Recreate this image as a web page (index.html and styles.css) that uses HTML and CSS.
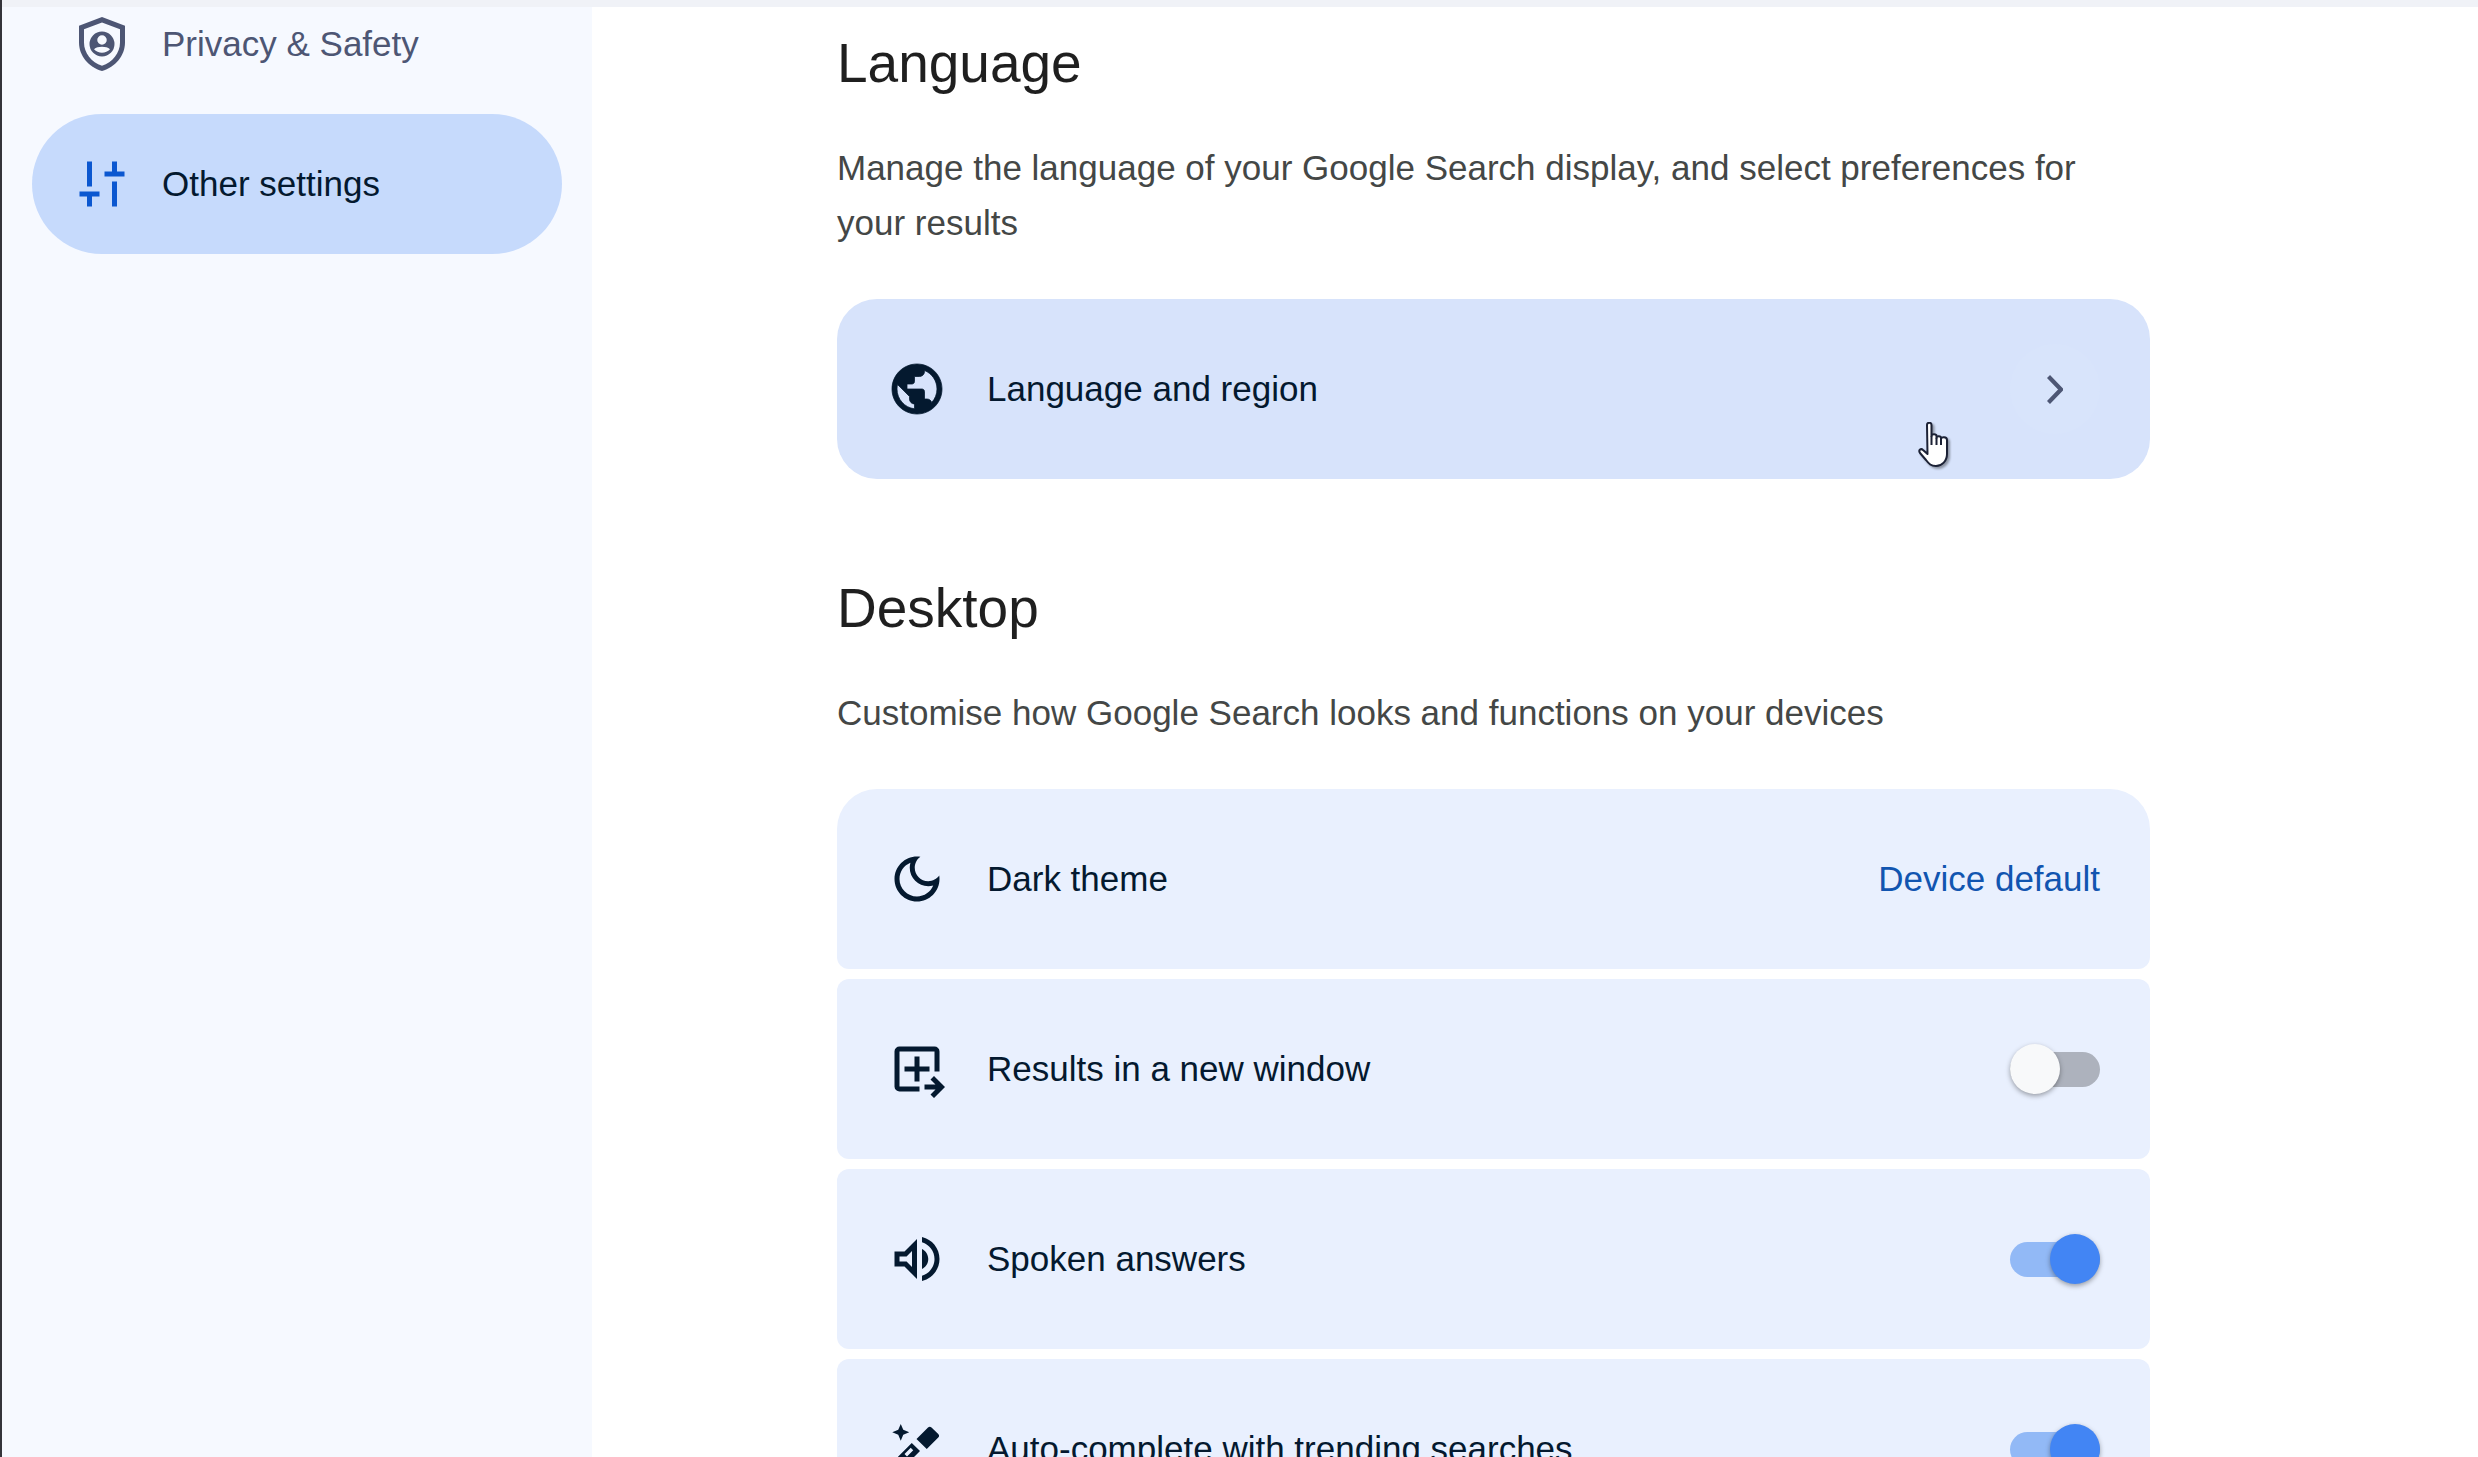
FILE: index.html
```html
<!DOCTYPE html>
<html lang="en">
<head>
<meta charset="utf-8">
<title>Search settings</title>
<link rel="stylesheet" href="styles.css">
</head>
<body>
<div class="edge-marks"></div>
<div class="topstrip"></div>
<div class="layout">
  <nav class="sidebar">
    <a class="nav-item">
      <svg class="nav-icon icon-muted" viewBox="0 0 24 24"><path fill-rule="evenodd" d="M12 1.200 2.800 4.700v6.700c0 5.200 3.800 9.900 9.200 11.400 5.400-1.500 9.200-6.200 9.200-11.400V4.700L12 1.200zm0 2.200 7.200 2.700v5.300c0 4.200-3 8-7.200 9.300-4.200-1.300-7.200-5.100-7.200-9.300V6.100L12 3.400zM12 7a5 5 0 1 0 0 10 5 5 0 0 0 0-10zm0 1.500a1.900 1.900 0 1 1 0 3.800 1.900 1.900 0 0 1 0-3.800zm0 7c-1.200 0-2.400-.5-3.200-1.400.8-.7 1.900-1 3.200-1s2.400.3 3.200 1c-.8.900-2 1.400-3.200 1.400z"/></svg>
      <span>Privacy &amp; Safety</span>
    </a>
    <a class="nav-item nav-active">
      <svg class="nav-icon icon-blue" viewBox="0 0 24 24"><path d="M6 3h2v10H6zM3 15h8v2H8v4H6v-4H3zM16 3h2v4h3v2h-8V7h3zM16 11h2v10h-2z"/></svg>
      <span>Other settings</span>
    </a>
  </nav>
  <main class="content">
    <h2 class="heading">Language</h2>
    <p class="desc">Manage the language of your Google Search display, and select preferences for your results</p>
    <div class="card card-hover">
      <svg class="icon icon-bold" viewBox="0 0 24 24"><path d="M12 2C6.480 2 2 6.480 2 12s4.480 10 10 10 10-4.480 10-10S17.520 2 12 2zm-1 17.930c-3.950-.49-7-3.850-7-7.930 0-.62.08-1.210.21-1.790L9 15v1c0 1.100.9 2 2 2v1.930zm6.900-2.540c-.26-.81-1-1.390-1.900-1.390h-1v-3c0-.55-.45-1-1-1H8v-2h2c.55 0 1-.45 1-1V7h2c1.100 0 2-.9 2-2v-.41c2.930 1.190 5 4.060 5 7.410 0 2.080-.8 3.970-2.100 5.390z"/></svg>
      <span class="label">Language and region</span>
      <span class="chevron-wrap"><svg class="chevron" viewBox="0 0 16 29"><path d="M1.500 1.500 14 14.500 1.500 27.500" fill="none" stroke-width="4.200"/></svg></span>
      <svg class="cursor" viewBox="0 0 33 46"><path d="M10 3c0-3 4.500-3 4.500 0v11c0-2.500 5-2.500 5 0v2c0-2.500 4.500-2.500 4.500 0v1c0-2.500 6-2.500 6 1v14c0 7-5 12-11 12-5 0-7-2-10-6l-6-7c-2-3 1-5 3-3l4.500 4z" fill="#fff" stroke="#1b2135" stroke-width="2" stroke-linejoin="round"/><path d="M14.500 14v9M19.500 16v7M24 17v6" fill="none" stroke="#1b2135" stroke-width="2"/></svg>
    </div>
    <h2 class="heading heading-second">Desktop</h2>
    <p class="desc">Customise how Google Search looks and functions on your devices</p>
    <div class="card-list">
      <div class="card card-first">
        <svg class="icon" viewBox="0 0 24 24"><path d="M9.370 5.510C9.190 6.150 9.100 6.820 9.100 7.500c0 4.080 3.320 7.400 7.400 7.400.68 0 1.350-.09 1.990-.27C17.450 17.190 14.930 19 12 19c-3.860 0-7-3.140-7-7 0-2.930 1.810-5.450 4.370-6.490zM12 3c-4.970 0-9 4.030-9 9s4.030 9 9 9 9-4.030 9-9c0-.46-.04-.92-.1-1.360-.98 1.370-2.580 2.260-4.400 2.260-2.980 0-5.400-2.420-5.400-5.400 0-1.810.89-3.420 2.260-4.400C12.920 3.040 12.460 3 12 3z"/></svg>
        <span class="label">Dark theme</span>
        <span class="value">Device default</span>
      </div>
      <div class="card">
        <svg class="icon" viewBox="0 0 24 24"><path d="M3 5a2 2 0 0 1 2-2h14a2 2 0 0 1 2 2v8h-2V5H5v14h8v2H5a2 2 0 0 1-2-2zM11 7h2v4h4v2h-4v4h-2v-4H7v-2h4zM15 18.200h4.400l-2-2 1.400-1.400 4.400 4.400-4.400 4.400-1.400-1.400 2-2H15z"/></svg>
        <span class="label">Results in a new window</span>
        <span class="toggle"><span class="knob"></span></span>
      </div>
      <div class="card">
        <svg class="icon" viewBox="0 0 24 24"><path d="M3 9v6h4l5 5V4L7 9H3zm7-.17v6.340L7.830 13H5v-2h2.830L10 8.830zM16.500 12c0-1.770-1.020-3.290-2.500-4.030v8.050c1.480-.73 2.500-2.250 2.500-4.020zM14 3.230v2.060c2.890.86 5 3.540 5 6.710s-2.110 5.850-5 6.710v2.060c4.010-.91 7-4.490 7-8.770 0-4.280-2.990-7.860-7-8.770z"/></svg>
        <span class="label">Spoken answers</span>
        <span class="toggle toggle-on"><span class="knob"></span></span>
      </div>
      <div class="card">
        <svg class="icon" viewBox="0 0 24 24"><path fill-rule="evenodd" d="M5.500 2 6.500 4.300 8.900 5.300 6.500 6.300 5.500 8.700 4.500 6.300 2.100 5.300 4.500 4.300zM16.400 3.400a1 1 0 0 1 1.400 0l2.700 2.600a1 1 0 0 1 0 1.400l-4.600 4.600-4.100-4zM9.900 9.600l3.300 3.200L6 20l-3.300-3.200zM9.500 11.500l-2.500 2.500 1 1 2.500-2.500z"/></svg>
        <span class="label">Auto-complete with trending searches</span>
        <span class="toggle toggle-on"><span class="knob"></span></span>
      </div>
    </div>
  </main>
</div>
</body>
</html>
```
FILE: styles.css
```css
html, body { margin: 0; height: 100%; overflow: hidden; background: #fff; }
body { width: 2478px; height: 1457px; font-family: "Liberation Sans", Arial, sans-serif; border-left: 2px solid #34343a; box-sizing: border-box; display: flex; flex-direction: column; position: relative; }
.edge-marks { position: absolute; left: -2px; top: 724px; width: 2px; height: 13px; background: #4a55a8; }
.topstrip { height: 7px; background: #f0f2f7; flex: none; }
.layout { flex: 1; display: flex; overflow: hidden; }
.sidebar { width: 590px; flex: none; background: #f6f9ff; box-sizing: border-box; padding: 0 30px; }
.nav-item { height: 140px; display: flex; align-items: center; padding-left: 40px; gap: 30px; border-radius: 70px; font-size: 35px; color: #4d5674; }
.nav-item:first-child { margin-top: -33px; }
.nav-active { background: #c6dafc; color: #04192f; }
.nav-icon { width: 60px; height: 60px; flex: none; }
.icon-muted { fill: #4d5674; }
.icon-blue { fill: #0b57d0; }
.content { flex: none; width: 1313px; margin-left: 245px; }
.heading { margin: 26px 0 0; font-weight: 400; font-size: 55px; line-height: 60px; color: #1f1f1f; }
.heading-second { margin-top: 99px; }
.desc { margin: 47px 0 0; font-size: 35px; line-height: 55px; color: #444746; }
.card { height: 180px; box-sizing: border-box; padding: 0 50px; display: flex; align-items: center; gap: 40px; background: #e9f0fe; border-radius: 12px; position: relative; font-size: 35px; color: #04192f; }
.card-hover { margin-top: 49px; background: #d7e3fb; border-radius: 40px; }
.card-list { margin-top: 49px; display: flex; flex-direction: column; gap: 10px; }
.card-first { border-radius: 40px 40px 12px 12px; }
.icon { width: 60px; height: 60px; flex: none; fill: #04192f; }
.icon-bold { stroke: #04192f; stroke-width: .3; }
.label { flex: 1; }
.value { color: #1155b0; }
.chevron-wrap { width: 90px; height: 90px; border-radius: 50%; background: #d8e4fb; display: flex; align-items: center; justify-content: center; }
.chevron { width: 16px; height: 29px; stroke: #4d5674; }
.cursor { position: absolute; left: 1080px; top: 123px; width: 33px; height: 46px; filter: drop-shadow(2px 2px 1px rgba(0,0,0,.35)); }
.toggle { width: 90px; height: 35px; border-radius: 18px; background: #adb2bd; position: relative; flex: none; }
.knob { position: absolute; left: 0; top: -8px; width: 50px; height: 50px; border-radius: 50%; background: #f8f9fa; box-shadow: 0 2px 5px rgba(0,0,0,.35); }
.toggle-on { background: #92b9f6; }
.toggle-on .knob { left: 40px; background: #4285f4; }
```
